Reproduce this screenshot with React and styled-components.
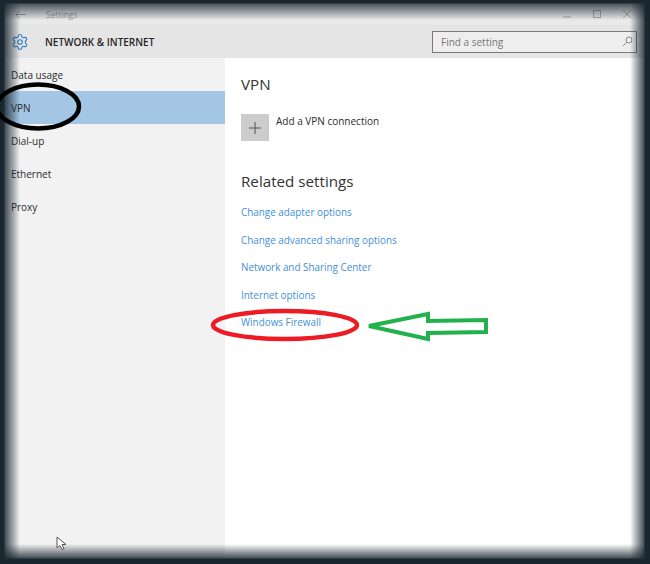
import React from 'react'
import styled, { createGlobalStyle } from 'styled-components'
import { Settings } from 'lucide-react'

const GlobalStyle = createGlobalStyle`
  html, body {
    margin: 0;
    padding: 0;
    background: #1a2730;
  }
`

const Page = styled.div`
  box-sizing: border-box;
  font-family: 'Open Sans', 'Noto Sans', sans-serif;
  height: 564px;
  overflow: hidden;
  padding: 3px 5px 5px 4px;
  position: relative;
  width: 650px;
`

const Win = styled.div`
  background: #fff;
  display: flex;
  flex-direction: column;
  height: 100%;
`

const TitleBar = styled.div`
  align-items: center;
  background: #e9e9e9;
  box-sizing: border-box;
  color: #9a9a9a;
  display: flex;
  flex-shrink: 0;
  font-size: 8.5px;
  height: 22px;
  padding: 0 0 0 11px;
`

const TitleText = styled.span`
  margin-left: 20px;
`

const WinButtons = styled.div`
  align-items: center;
  display: flex;
  gap: 22px;
  margin-left: auto;
  margin-right: 14px;
`

const Header = styled.div`
  align-items: center;
  background: #e5e5e5;
  box-sizing: border-box;
  display: flex;
  flex-shrink: 0;
  height: 33px;
  padding: 0 8px 0 7px;
`

const HeaderTitle = styled.div`
  color: #262626;
  font-size: 10px;
  font-weight: 600;
  margin-left: 16px;
`

const SearchBox = styled.div`
  align-items: center;
  background: #eeeeee;
  border: 1.5px solid #7b7b7b;
  box-sizing: border-box;
  color: #767676;
  display: flex;
  font-size: 10px;
  height: 22px;
  justify-content: space-between;
  margin-left: auto;
  padding: 0 3px 0 8px;
  width: 205px;
`

const Body = styled.div`
  display: flex;
  flex: 1;
`

const Sidebar = styled.nav`
  background: #f2f2f2;
  display: flex;
  flex-direction: column;
  width: 221px;
`

const NavItem = styled.div`
  align-items: center;
  background: ${(p) => (p.$active ? '#a3c6e5' : 'transparent')};
  box-sizing: border-box;
  color: #2b2b2b;
  display: flex;
  font-size: 10px;
  height: 33px;
  padding-left: 7px;
`

const Content = styled.main`
  display: flex;
  flex: 1;
  flex-direction: column;
  padding: 15px 0 0 16px;
`

const Heading = styled.h2`
  color: #333;
  font-size: 15.2px;
  font-weight: 400;
  line-height: 22px;
  margin: 0;
`

const AddRow = styled.div`
  display: flex;
  gap: 7px;
  margin-top: 19px;
`

const AddTile = styled.div`
  align-items: center;
  background: #cccccc;
  display: flex;
  height: 27px;
  justify-content: center;
  width: 28px;
`

const AddLabel = styled.div`
  color: #2b2b2b;
  font-size: 10px;
  line-height: 14px;
`

const RelatedHeading = styled(Heading)`
  margin-top: 29px;
`

const LinkList = styled.div`
  display: flex;
  flex-direction: column;
  gap: 13.6px;
  margin-top: 13px;
`

const SettingLink = styled.a`
  color: #3f8fd6;
  font-size: 9.9px;
  line-height: 14px;
`

const Vignette = styled.div`
  background:
    linear-gradient(to bottom, #1a2730 0, #1a2730 3px, rgba(26, 39, 48, 0.75) 4px, rgba(26, 39, 48, 0) 20px),
    linear-gradient(to top, #1a2730 0, #1a2730 5px, rgba(26, 39, 48, 0.8) 6px, rgba(26, 39, 48, 0) 20px),
    linear-gradient(to right, #1a2730 0, #1a2730 4px, rgba(26, 39, 48, 0.8) 5px, rgba(26, 39, 48, 0) 20px),
    linear-gradient(to left, #1a2730 0, #1a2730 5px, rgba(26, 39, 48, 0.8) 6px, rgba(26, 39, 48, 0) 20px);
  inset: 0;
  pointer-events: none;
  position: absolute;
`

const Marks = styled.svg`
  height: 564px;
  left: 0;
  pointer-events: none;
  position: absolute;
  top: 0;
  width: 650px;
`

const Cursor = styled.svg`
  height: 15px;
  left: 56px;
  position: absolute;
  top: 536px;
  width: 11px;
`

const links = [
  'Change adapter options',
  'Change advanced sharing options',
  'Network and Sharing Center',
  'Internet options',
  'Windows Firewall',
]

const navItems = ['Data usage', 'VPN', 'Dial-up', 'Ethernet', 'Proxy']

export default function App() {
  return (
    <Page>
      <GlobalStyle />
      <Win>
        <TitleBar>
          <svg width="11" height="9" viewBox="0 0 11 9" fill="none" stroke="#9a9a9a">
            <path d="M11 4.5H1M5 .5l-4 4 4 4" />
          </svg>
          <TitleText>Settings</TitleText>
          <WinButtons>
            <svg width="8" height="8" viewBox="0 0 8 8" stroke="#a5a5a5" fill="none"><path d="M0 7h8" /></svg>
            <svg width="8" height="8" viewBox="0 0 8 8" stroke="#a5a5a5" fill="none"><rect x=".5" y=".5" width="7" height="7" /></svg>
            <svg width="8" height="8" viewBox="0 0 8 8" stroke="#a5a5a5" fill="none"><path d="M0 0l8 8M8 0L0 8" /></svg>
          </WinButtons>
        </TitleBar>
        <Header>
          <Settings size={18} color="#2f7fc4" strokeWidth={1.5} />
          <HeaderTitle>NETWORK &amp; INTERNET</HeaderTitle>
          <SearchBox>
            Find a setting
            <svg width="11" height="11" viewBox="0 0 11 11" fill="none" stroke="#888">
              <circle cx="7" cy="4" r="3" />
              <path d="M5 6l-4 4" />
            </svg>
          </SearchBox>
        </Header>
        <Body>
          <Sidebar>
            {navItems.map((item) => (
              <NavItem key={item} $active={item === 'VPN'}>{item}</NavItem>
            ))}
          </Sidebar>
          <Content>
            <Heading>VPN</Heading>
            <AddRow>
              <AddTile>
                <svg width="12" height="12" viewBox="0 0 12 12" stroke="#555" fill="none"><path d="M6 0v12M0 6h12" /></svg>
              </AddTile>
              <AddLabel>Add a VPN connection</AddLabel>
            </AddRow>
            <RelatedHeading>Related settings</RelatedHeading>
            <LinkList>
              {links.map((link) => (
                <SettingLink key={link}>{link}</SettingLink>
              ))}
            </LinkList>
          </Content>
        </Body>
      </Win>
      <Vignette />
      <Marks viewBox="0 0 650 564" fill="none">
        <ellipse cx="38" cy="106.5" rx="41" ry="22" stroke="#000" strokeWidth="4.5" />
        <ellipse cx="285" cy="325" rx="72" ry="14" stroke="#ed1c24" strokeWidth="4.5" />
        <path d="M369 326L428 314V321L486 320V332L428 333V339Z" stroke="#22b14c" strokeWidth="4" />
      </Marks>
      <Cursor viewBox="0 0 11 15">
        <path d="M1 1v11l3-2.500 2 4 2-1-2-4h4z" fill="#fff" stroke="#555" />
      </Cursor>
    </Page>
  )
}
